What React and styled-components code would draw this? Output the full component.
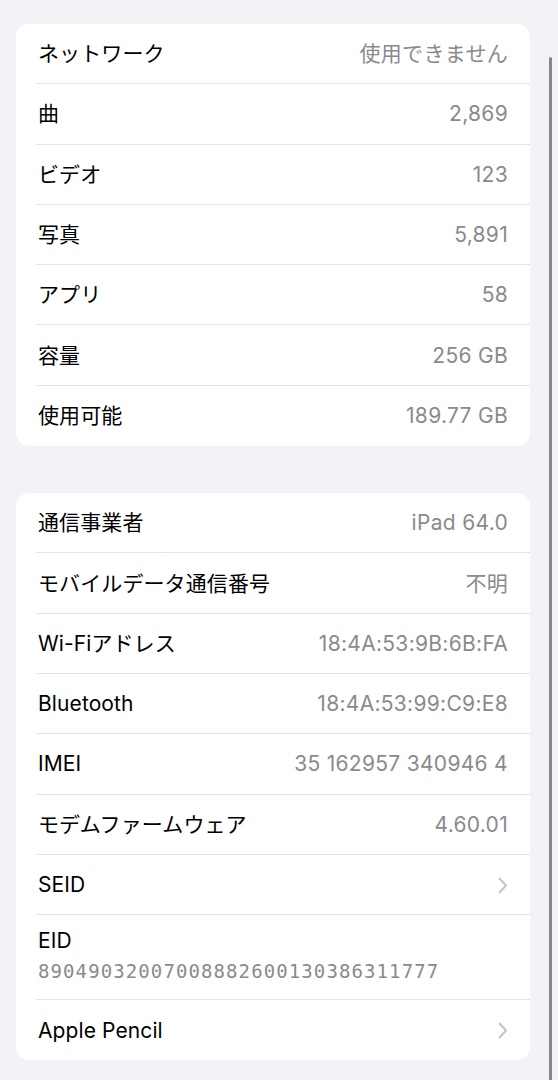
import React from 'react';
import styled, { createGlobalStyle } from 'styled-components';

const GlobalStyle = createGlobalStyle`
    html, body {
        margin: 0;
        padding: 0;
        background: #f2f2f7;
        font-family: Inter, "Noto Sans CJK JP", sans-serif;
        -webkit-font-smoothing: antialiased;
    }
`;

const sectionOne = [
    { label: 'ネットワーク', value: '使用できません' },
    { label: '曲', value: '2,869' },
    { label: 'ビデオ', value: '123' },
    { label: '写真', value: '5,891' },
    { label: 'アプリ', value: '58' },
    { label: '容量', value: '256 GB' },
    { label: '使用可能', value: '189.77 GB' },
];

const sectionTwo = [
    { label: '通信事業者', value: 'iPad 64.0' },
    { label: 'モバイルデータ通信番号', value: '不明' },
    { label: 'Wi-Fiアドレス', value: '18:4A:53:9B:6B:FA' },
    { label: 'Bluetooth', value: '18:4A:53:99:C9:E8' },
    { label: 'IMEI', value: '35 162957 340946 4' },
    { label: 'モデムファームウェア', value: '4.60.01' },
    { label: 'SEID', chevron: true },
    { label: 'EID', sub: '89049032007008882600130386311777' },
    { label: 'Apple Pencil', chevron: true },
];

function Chevron() {
    return (
        <svg width="10" height="17" viewBox="0 0 10 17" fill="none">
            <path d="M1.5 1.5 L8 8.5 L1.5 15.5" stroke="#c4c4c7" strokeWidth="2" strokeLinecap="round" strokeLinejoin="round" />
        </svg>
    );
}

function InfoRow({ item, last }) {
    if (item.sub) {
        return (
            <StackRow $last={last}>
                <Label>{item.label}</Label>
                <Mono>{item.sub}</Mono>
            </StackRow>
        );
    }
    return (
        <Row $last={last}>
            <Label>{item.label}</Label>
            {item.chevron ? <Chevron /> : <Value>{item.value}</Value>}
        </Row>
    );
}

function Section({ items }) {
    return (
        <Card>
            {items.map((item, i) => (
                <InfoRow key={item.label} item={item} last={i === items.length - 1} />
            ))}
        </Card>
    );
}

export default function App() {
    return (
        <>
            <GlobalStyle />
            <Page>
                <Section items={sectionOne} />
                <Section items={sectionTwo} />
            </Page>
            <ScrollBar />
        </>
    );
}

const Page = styled.div`
    display: flex;
    flex-direction: column;
    gap: 47px;
    padding: 24px 28px 0 16px;
    min-height: 1080px;
    box-sizing: border-box;
`;

const Card = styled.div`
    background: #ffffff;
    border-radius: 13px;
    display: flex;
    flex-direction: column;
`;

const Row = styled.div`
    height: 60.3px;
    box-sizing: border-box;
    margin-left: 20px;
    padding: 1px 22px 0 2px;
    display: flex;
    align-items: center;
    justify-content: space-between;
    border-bottom: ${p => (p.$last ? 'none' : '1px solid #e3e3e7')};
`;

const StackRow = styled.div`
    height: 85px;
    box-sizing: border-box;
    margin-left: 20px;
    padding: 13px 22px 0 2px;
    display: flex;
    flex-direction: column;
    justify-content: flex-start;
    gap: 5px;
    border-bottom: ${p => (p.$last ? 'none' : '1px solid #e3e3e7')};
`;

const Label = styled.span`
    font-size: 21px;
    line-height: 26px;
    color: #000000;
    letter-spacing: 0.1px;
`;

const Value = styled.span`
    font-size: 21px;
    line-height: 26px;
    color: #8a8a8e;
    letter-spacing: 0.3px;
`;

const Mono = styled.span`
    font-family: "DejaVu Sans Mono", "Liberation Mono", monospace;
    font-size: 19px;
    line-height: 24px;
    color: #8a8a8e;
    letter-spacing: 1.1px;
`;

const ScrollBar = styled.div`
    position: absolute;
    top: 57px;
    left: 549px;
    width: 3px;
    height: 1030px;
    border-radius: 2px;
    background: #86868b;
`;
